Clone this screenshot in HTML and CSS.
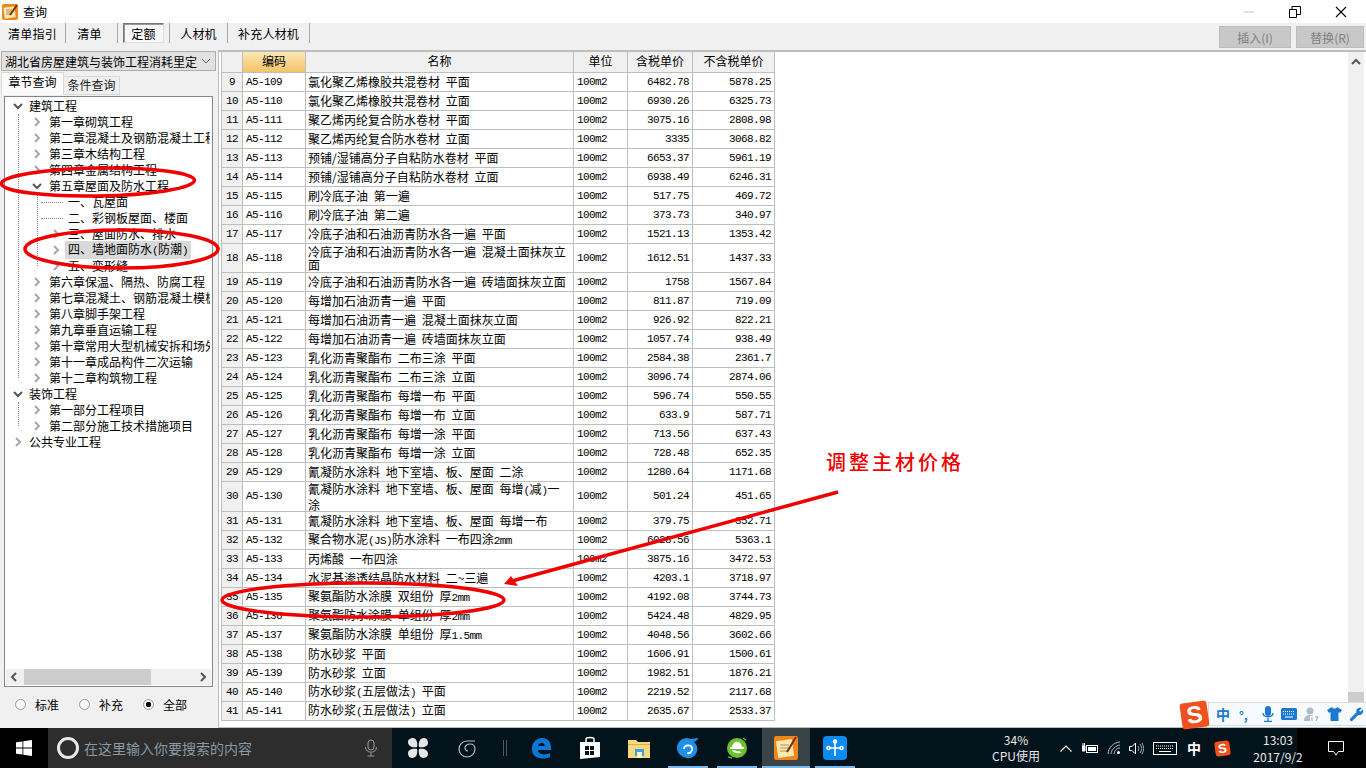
FILE: index.html
```html
<!DOCTYPE html>
<html lang="zh-CN">
<head>
    <meta charset="UTF-8">
    <title>查询</title>
    <link rel="stylesheet" href="styles.css">
</head>
<body>
    <svg class="defs" width="0" height="0">
        <symbol id="tw-closed" viewBox="0 0 10 10"><path d="M3 1l4 4-4 4" fill="none" stroke="#a6a6a6" stroke-width="2"/></symbol>
        <symbol id="tw-open" viewBox="0 0 10 10"><path d="M1 3l4 4 4-4" fill="none" stroke="#555" stroke-width="2"/></symbol>
    </svg>

    <div class="window">
        <div class="titlebar">
            <svg class="app-icon" viewBox="0 0 16 16"><rect width="16" height="16" rx="2" fill="#f0861a"/><rect x="2" y="3" width="11" height="11" fill="#fbe9b0" transform="rotate(-8 7 8)"/><path d="M4 6h6M4 8h6M4 10h5" stroke="#b59060"/><path d="M15 1L8 11" stroke="#7a3008" stroke-width="2"/></svg>
            <span class="title">查询</span>
            <div class="win-controls">
                <span class="win-btn"><svg width="12" height="12" viewBox="0 0 12 12"><path d="M1 6h10" stroke="#c0c0c0"/></svg></span>
                <span class="win-btn"><svg width="12" height="12" viewBox="0 0 12 12"><path d="M.5 3.500h7v8h-7zM3 3V.5h8.500v8H8" fill="none" stroke="#000"/></svg></span>
                <span class="win-btn"><svg width="12" height="12" viewBox="0 0 12 12"><path d="M1 1l10 10M11 1L1 11" stroke="#000" stroke-width="1.100"/></svg></span>
            </div>
        </div>

        <div class="toolbar">
            <span class="tool tool-1">清单指引</span>
            <span class="tool tool-2">清单</span>
            <span class="tool tool-3"><b class="pressed">定额</b></span>
            <span class="tool tool-4">人材机</span>
            <span class="tool tool-5">补充人材机</span>
            <div class="actions">
                <button class="action action-insert">插入(I)</button>
                <button class="action action-replace">替换(R)</button>
            </div>
        </div>

        <div class="main">
            <aside class="sidebar">
                <div class="combo"><span>湖北省房屋建筑与装饰工程消耗里定</span><svg width="10" height="10" viewBox="0 0 10 10"><path d="M1 3l4 4 4-4" fill="none" stroke="#666"/></svg></div>
                <div class="tabs">
                    <span class="tab active">章节查询</span>
                    <span class="tab">条件查询</span>
                </div>
                <div class="treebox">
                    <div class="tree-scroll">
                        <div class="node lv0"><svg class="tw"><use href="#tw-open"/></svg><span>建筑工程</span></div>
                        <div class="branch branch-a">
                            <div class="node lv1"><svg class="tw"><use href="#tw-closed"/></svg><span>第一章砌筑工程</span></div>
                            <div class="node lv1"><svg class="tw"><use href="#tw-closed"/></svg><span>第二章混凝土及钢筋混凝土工程</span></div>
                            <div class="node lv1"><svg class="tw"><use href="#tw-closed"/></svg><span>第三章木结构工程</span></div>
                            <div class="node lv1"><svg class="tw"><use href="#tw-closed"/></svg><span>第四章金属结构工程</span></div>
                            <div class="node lv1"><svg class="tw"><use href="#tw-open"/></svg><span>第五章屋面及防水工程</span></div>
                            <div class="branch branch-b">
                                <div class="node lv2 leaf"><span>一、瓦屋面</span></div>
                                <div class="node lv2 leaf"><span>二、彩钢板屋面、楼面</span></div>
                                <div class="node lv2"><svg class="tw"><use href="#tw-closed"/></svg><span>三、屋面防水、排水</span></div>
                                <div class="node lv2"><svg class="tw"><use href="#tw-closed"/></svg><span class="selected">四、墙地面防水<span class="m">(</span>防潮<span class="m">)</span></span></div>
                                <div class="node lv2"><svg class="tw"><use href="#tw-closed"/></svg><span>五、变形缝</span></div>
                            </div>
                            <div class="node lv1"><svg class="tw"><use href="#tw-closed"/></svg><span>第六章保温、隔热、防腐工程</span></div>
                            <div class="node lv1"><svg class="tw"><use href="#tw-closed"/></svg><span>第七章混凝土、钢筋混凝土模板</span></div>
                            <div class="node lv1"><svg class="tw"><use href="#tw-closed"/></svg><span>第八章脚手架工程</span></div>
                            <div class="node lv1"><svg class="tw"><use href="#tw-closed"/></svg><span>第九章垂直运输工程</span></div>
                            <div class="node lv1"><svg class="tw"><use href="#tw-closed"/></svg><span>第十章常用大型机械安拆和场外</span></div>
                            <div class="node lv1"><svg class="tw"><use href="#tw-closed"/></svg><span>第十一章成品构件二次运输</span></div>
                            <div class="node lv1"><svg class="tw"><use href="#tw-closed"/></svg><span>第十二章构筑物工程</span></div>
                        </div>
                        <div class="node lv0"><svg class="tw"><use href="#tw-open"/></svg><span>装饰工程</span></div>
                        <div class="branch branch-a">
                            <div class="node lv1"><svg class="tw"><use href="#tw-closed"/></svg><span>第一部分工程项目</span></div>
                            <div class="node lv1"><svg class="tw"><use href="#tw-closed"/></svg><span>第二部分施工技术措施项目</span></div>
                        </div>
                        <div class="node lv0"><svg class="tw"><use href="#tw-closed"/></svg><span>公共专业工程</span></div>
                    </div>
                    <div class="hscroll">
                        <svg width="17" height="16" viewBox="0 0 17 16"><path d="M10 4L6 8l4 4" fill="none" stroke="#555" stroke-width="2"/></svg>
                        <div class="hscroll-track"><div class="hscroll-thumb"></div></div>
                        <svg width="17" height="16" viewBox="0 0 17 16"><path d="M7 4l4 4-4 4" fill="none" stroke="#555" stroke-width="2"/></svg>
                    </div>
                </div>
                <div class="radios">
                    <label class="radio"><i></i>标准</label>
                    <label class="radio"><i></i>补充</label>
                    <label class="radio on"><i></i>全部</label>
                </div>
            </aside>

            <section class="grid">
                <table>
                    <thead>
                        <tr><th class="c-no"></th><th class="c-code sorted">编码</th><th class="c-name">名称</th><th class="c-unit">单位</th><th class="c-price">含税单价</th><th class="c-net">不含税单价</th></tr>
                    </thead>
                    <tbody>
                        <tr><td class="no">9</td><td class="m">A5-109</td><td class="n">氯化聚乙烯橡胶共混卷材 平面</td><td class="m">100m2</td><td class="m r">6482.78</td><td class="m r">5878.25</td></tr>
                        <tr><td class="no">10</td><td class="m">A5-110</td><td class="n">氯化聚乙烯橡胶共混卷材 立面</td><td class="m">100m2</td><td class="m r">6930.26</td><td class="m r">6325.73</td></tr>
                        <tr><td class="no">11</td><td class="m">A5-111</td><td class="n">聚乙烯丙纶复合防水卷材 平面</td><td class="m">100m2</td><td class="m r">3075.16</td><td class="m r">2808.98</td></tr>
                        <tr><td class="no">12</td><td class="m">A5-112</td><td class="n">聚乙烯丙纶复合防水卷材 立面</td><td class="m">100m2</td><td class="m r">3335</td><td class="m r">3068.82</td></tr>
                        <tr><td class="no">13</td><td class="m">A5-113</td><td class="n">预铺/湿铺高分子自粘防水卷材 平面</td><td class="m">100m2</td><td class="m r">6653.37</td><td class="m r">5961.19</td></tr>
                        <tr><td class="no">14</td><td class="m">A5-114</td><td class="n">预铺/湿铺高分子自粘防水卷材 立面</td><td class="m">100m2</td><td class="m r">6938.49</td><td class="m r">6246.31</td></tr>
                        <tr><td class="no">15</td><td class="m">A5-115</td><td class="n">刷冷底子油 第一遍</td><td class="m">100m2</td><td class="m r">517.75</td><td class="m r">469.72</td></tr>
                        <tr><td class="no">16</td><td class="m">A5-116</td><td class="n">刷冷底子油 第二遍</td><td class="m">100m2</td><td class="m r">373.73</td><td class="m r">340.97</td></tr>
                        <tr><td class="no">17</td><td class="m">A5-117</td><td class="n">冷底子油和石油沥青防水各一遍 平面</td><td class="m">100m2</td><td class="m r">1521.13</td><td class="m r">1353.42</td></tr>
                        <tr class="tall"><td class="no">18</td><td class="m">A5-118</td><td class="n">冷底子油和石油沥青防水各一遍 混凝土面抹灰立面</td><td class="m">100m2</td><td class="m r">1612.51</td><td class="m r">1437.33</td></tr>
                        <tr><td class="no">19</td><td class="m">A5-119</td><td class="n">冷底子油和石油沥青防水各一遍 砖墙面抹灰立面</td><td class="m">100m2</td><td class="m r">1758</td><td class="m r">1567.84</td></tr>
                        <tr><td class="no">20</td><td class="m">A5-120</td><td class="n">每增加石油沥青一遍 平面</td><td class="m">100m2</td><td class="m r">811.87</td><td class="m r">719.09</td></tr>
                        <tr><td class="no">21</td><td class="m">A5-121</td><td class="n">每增加石油沥青一遍 混凝土面抹灰立面</td><td class="m">100m2</td><td class="m r">926.92</td><td class="m r">822.21</td></tr>
                        <tr><td class="no">22</td><td class="m">A5-122</td><td class="n">每增加石油沥青一遍 砖墙面抹灰立面</td><td class="m">100m2</td><td class="m r">1057.74</td><td class="m r">938.49</td></tr>
                        <tr><td class="no">23</td><td class="m">A5-123</td><td class="n">乳化沥青聚酯布 二布三涂 平面</td><td class="m">100m2</td><td class="m r">2584.38</td><td class="m r">2361.7</td></tr>
                        <tr><td class="no">24</td><td class="m">A5-124</td><td class="n">乳化沥青聚酯布 二布三涂 立面</td><td class="m">100m2</td><td class="m r">3096.74</td><td class="m r">2874.06</td></tr>
                        <tr><td class="no">25</td><td class="m">A5-125</td><td class="n">乳化沥青聚酯布 每增一布 平面</td><td class="m">100m2</td><td class="m r">596.74</td><td class="m r">550.55</td></tr>
                        <tr><td class="no">26</td><td class="m">A5-126</td><td class="n">乳化沥青聚酯布 每增一布 立面</td><td class="m">100m2</td><td class="m r">633.9</td><td class="m r">587.71</td></tr>
                        <tr><td class="no">27</td><td class="m">A5-127</td><td class="n">乳化沥青聚酯布 每增一涂 平面</td><td class="m">100m2</td><td class="m r">713.56</td><td class="m r">637.43</td></tr>
                        <tr><td class="no">28</td><td class="m">A5-128</td><td class="n">乳化沥青聚酯布 每增一涂 立面</td><td class="m">100m2</td><td class="m r">728.48</td><td class="m r">652.35</td></tr>
                        <tr><td class="no">29</td><td class="m">A5-129</td><td class="n">氰凝防水涂料 地下室墙、板、屋面 二涂</td><td class="m">100m2</td><td class="m r">1280.64</td><td class="m r">1171.68</td></tr>
                        <tr class="tall"><td class="no">30</td><td class="m">A5-130</td><td class="n">氰凝防水涂料 地下室墙、板、屋面 每增<span class="m">(</span>减<span class="m">)</span>一涂</td><td class="m">100m2</td><td class="m r">501.24</td><td class="m r">451.65</td></tr>
                        <tr><td class="no">31</td><td class="m">A5-131</td><td class="n">氰凝防水涂料 地下室墙、板、屋面 每增一布</td><td class="m">100m2</td><td class="m r">379.75</td><td class="m r">352.71</td></tr>
                        <tr><td class="no">32</td><td class="m">A5-132</td><td class="n">聚合物水泥<span class="m">(JS)</span>防水涂料 一布四涂<span class="m">2mm</span></td><td class="m">100m2</td><td class="m r">6028.56</td><td class="m r">5363.1</td></tr>
                        <tr><td class="no">33</td><td class="m">A5-133</td><td class="n">丙烯酸 一布四涂</td><td class="m">100m2</td><td class="m r">3875.16</td><td class="m r">3472.53</td></tr>
                        <tr><td class="no">34</td><td class="m">A5-134</td><td class="n">水泥基渗透结晶防水材料 二~三遍</td><td class="m">100m2</td><td class="m r">4203.1</td><td class="m r">3718.97</td></tr>
                        <tr><td class="no">35</td><td class="m">A5-135</td><td class="n">聚氨酯防水涂膜 双组份 厚<span class="m">2mm</span></td><td class="m">100m2</td><td class="m r">4192.08</td><td class="m r">3744.73</td></tr>
                        <tr><td class="no">36</td><td class="m">A5-136</td><td class="n">聚氨酯防水涂膜 单组份 厚<span class="m">2mm</span></td><td class="m">100m2</td><td class="m r">5424.48</td><td class="m r">4829.95</td></tr>
                        <tr><td class="no">37</td><td class="m">A5-137</td><td class="n">聚氨酯防水涂膜 单组份 厚<span class="m">1.5mm</span></td><td class="m">100m2</td><td class="m r">4048.56</td><td class="m r">3602.66</td></tr>
                        <tr><td class="no">38</td><td class="m">A5-138</td><td class="n">防水砂浆 平面</td><td class="m">100m2</td><td class="m r">1606.91</td><td class="m r">1500.61</td></tr>
                        <tr><td class="no">39</td><td class="m">A5-139</td><td class="n">防水砂浆 立面</td><td class="m">100m2</td><td class="m r">1982.51</td><td class="m r">1876.21</td></tr>
                        <tr><td class="no">40</td><td class="m">A5-140</td><td class="n">防水砂浆<span class="m">(</span>五层做法<span class="m">)</span> 平面</td><td class="m">100m2</td><td class="m r">2219.52</td><td class="m r">2117.68</td></tr>
                        <tr><td class="no">41</td><td class="m">A5-141</td><td class="n">防水砂浆<span class="m">(</span>五层做法<span class="m">)</span> 立面</td><td class="m">100m2</td><td class="m r">2635.67</td><td class="m r">2533.37</td></tr>
                    </tbody>
                </table>
                <div class="vscroll">
                    <svg width="16" height="16" viewBox="0 0 16 16"><path d="M4 10l4-4 4 4" fill="none" stroke="#555" stroke-width="2"/></svg>
                    <div class="vscroll-thumb"></div>
                </div>
            </section>
        </div>
    </div>

    <footer class="taskbar">
        <div class="start"><svg width="16" height="16" viewBox="0 0 16 16"><path d="M0 2.300l6.500-.9v6.200H0zM7.300 1.300L16 0v7.600H7.300zM0 8.400h6.500v6.200L0 13.700zM7.300 8.400H16V16l-8.700-1.300z" fill="#fff"/></svg></div>
        <div class="search">
            <span class="cortana"></span>
            <span class="search-text">在这里输入你要搜索的内容</span>
            <svg class="search-mic" width="14" height="18" viewBox="0 0 14 18"><rect x="4" y="1" width="6" height="10" rx="3" fill="none" stroke="#999"/><path d="M1.500 8c0 7 11 7 11 0M7 14v3M3.500 17h7" fill="none" stroke="#999"/></svg>
        </div>
        <div class="tb-slot"><svg width="24" height="24" viewBox="0 0 24 24"><g fill="#e6e6e6"><path d="M11 11C6 12 2 10 2 6c0-3 3-4 5-4 3 0 5 4 4 9z"/><path d="M13 11C12 6 14 2 18 2c3 0 4 3 4 5 0 3-4 5-9 4z"/><path d="M13 13c5-1 9 1 9 5 0 3-3 4-5 4-3 0-5-4-4-9z"/><path d="M11 13c1 5-1 9-5 9-3 0-4-3-4-5 0-3 4-5 9-4z"/></g></svg></div>
        <div class="tb-slot"><svg width="20" height="20" viewBox="0 0 20 20"><path d="M18 3H10a8 8 0 1 0 8 8c0-3-2-5-5-5s-5 2-5 4 2 3 3 3" fill="none" stroke="#bbb" stroke-width="1.200"/></svg></div>
        <div class="tb-sep"><i></i><i></i></div>
        <div class="tb-slot"><svg width="22" height="22" viewBox="0 0 22 22"><path d="M2 12C2 5 7 1 12 1c6 0 9 4 9 10v2H8c0 4 6 6 12 3v4c-7 3-18 2-18-8zm6-3h7c0-4-6-4-7 0z" fill="#0a78d7"/></svg></div>
        <div class="tb-slot"><svg width="22" height="24" viewBox="0 0 22 24"><path d="M1 6h20v15l-20 2z" fill="#fff"/><path d="M7 6V3c0-2 8-2 8 0v3" fill="none" stroke="#fff" stroke-width="1.500"/><path d="M6 10h4v4H6zM11 10h4v4h-4zM6 15h4v4H6zM11 15h4v4h-4z" fill="#001018"/></svg></div>
        <div class="tb-slot"><svg width="22" height="20" viewBox="0 0 22 20"><path d="M0 2h8l2 2h12v16H0z" fill="#f5d77e"/><path d="M0 6h22v1H0z" fill="#e0b040"/><rect x="7" y="11" width="9" height="7" fill="#3aa0e0"/><rect x="9" y="14" width="5" height="6" fill="#fdf0c0"/></svg></div>
        <div class="tb-slot running"><svg width="24" height="24" viewBox="0 0 24 24"><path d="M1 12C1 6 6 2 11 2c2 0 3 1 4 1 2 0 5-1 8-1-2 2-3 3-5 4 3 3 4 6 3 9-1 5-6 8-10 7-6-1-10-5-10-10z" fill="#1f8ee8"/><path d="M8 13c0-4 7-5 8-1 1 3-2 6-5 5" fill="none" stroke="#fff" stroke-width="1.800"/></svg></div>
        <div class="tb-slot running"><svg width="24" height="24" viewBox="0 0 24 24"><circle cx="12" cy="12" r="10" fill="#6cc22e"/><path d="M5 12h14" stroke="#fff" stroke-width="2"/><path d="M7 11c1-7 9-7 10 0zM7 14c2 4 7 4 10 2" fill="#fff"/><path d="M18 2l3 2M3 21l4 1" stroke="#5fb02a" stroke-width="1.500"/></svg></div>
        <div class="tb-slot running active"><svg width="24" height="24" viewBox="0 0 24 24"><rect x="0" y="0" width="24" height="24" rx="2" fill="#f0861a"/><rect x="3" y="4" width="16" height="17" fill="#fbe9b0" transform="rotate(-8 11 12)"/><path d="M6 9h9M6 12h9M6 15h7" stroke="#b59060" stroke-width="1"/><path d="M22 1L13 16" stroke="#7a3008" stroke-width="2"/></svg></div>
        <div class="tb-slot running"><svg width="24" height="24" viewBox="0 0 24 24"><rect width="24" height="24" rx="4" fill="#0d8bf0"/><path d="M12 4v16M12 4c-2 0-2 3 0 3s2-3 0-3zM4 12c0-2 3-2 3 0s-3 2-3 0zM20 12c0-2-3-2-3 0s3 2 3 0zM6 12h12" fill="none" stroke="#fff" stroke-width="1.600"/></svg></div>

        <div class="cpu"><span>34%</span><span>CPU使用</span></div>
        <div class="tray tray-up"><svg width="12" height="7" viewBox="0 0 12 7"><path d="M.5 6.500L6 1l5.500 5.500" fill="none" stroke="#fff" stroke-width="1.100"/></svg></div>
        <div class="tray tray-bat"><svg width="17" height="11" viewBox="0 0 17 11"><rect x="4.500" y="2.500" width="11" height="7" fill="none" stroke="#fff"/><rect x="6" y="4" width="8" height="4" fill="#fff"/><path d="M0 3h3v5H0zM1 0v3M2.500 0v3" stroke="#fff" fill="#fff"/></svg></div>
        <div class="tray tray-wifi"><svg width="14" height="14" viewBox="0 0 14 14"><path d="M1 13C1 7 7 1 13 1M4 13c0-4 5-9 9-9M7 13c0-3 3-6 6-6" fill="none" stroke="#bbb"/><circle cx="11.500" cy="11.500" r="1.500" fill="#fff"/></svg></div>
        <div class="tray tray-vol"><svg width="16" height="13" viewBox="0 0 16 13"><path d="M.5 4.500h2.500L6.500 1v11L3 8.500H.5z" fill="none" stroke="#fff"/><path d="M9 4c1 1 1 4 0 5M11 2c2 2 2 7 0 9M13 1c2 3 2 8 0 11" fill="none" stroke="#aaa"/></svg></div>
        <div class="tray tray-kbd"><svg width="24" height="13" viewBox="0 0 24 13"><rect x=".5" y=".5" width="23" height="12" fill="none" stroke="#fff"/><path d="M3 4h18M3 6.500h18" stroke="#fff" stroke-dasharray="1 1"/><path d="M6 9.500h12" stroke="#fff"/></svg></div>
        <div class="tray tray-ime">中</div>
        <div class="tray tray-sogou"><span class="sogou-s small">S</span></div>
        <div class="clock"><span>13:03</span><span>2017/9/2</span></div>
        <div class="notify"><svg width="16" height="15" viewBox="0 0 16 15"><path d="M.5.500h15v10h-5L8 14l-2.500-3.500h-5z" fill="none" stroke="#fff"/></svg></div>
    </footer>

    <div class="ime-bar">
        <span class="sogou-s">S</span>
        <div class="ime-tools">
            <b class="ime-zh">中</b>
            <b class="ime-punc">°,</b>
            <svg width="12" height="16" viewBox="0 0 12 16"><rect x="3" y="0" width="6" height="10" rx="3" fill="#1a7ad0"/><path d="M1 7c0 5 10 5 10 0M6 12v3M2 15.500h8" fill="none" stroke="#1a7ad0" stroke-width="1.300"/></svg>
            <svg width="16" height="12" viewBox="0 0 16 12"><rect width="16" height="12" rx="1.500" fill="#1a7ad0"/><path d="M2 3.500h12M2 6h12" stroke="#fff" stroke-dasharray="1 1"/><path d="M4 9h8" stroke="#fff"/></svg>
            <svg width="16" height="15" viewBox="0 0 16 15"><circle cx="6" cy="4" r="3.500" fill="#aebccb"/><path d="M0 14c0-5 3-6 6-6s6 1 6 6z" fill="#aebccb"/><rect x="6" y="9" width="10" height="6" fill="#fff"/><path d="M8 10v4M11 10h3l-2 4" fill="none" stroke="#99a" /></svg>
            <svg width="15" height="14" viewBox="0 0 15 14"><path d="M5 0L0 3l2 3 1.500-1v9h8V5L13 6l2-3-5-3c-1 2-4 2-5 0z" fill="#1a7ad0"/></svg>
            <svg width="15" height="15" viewBox="0 0 14 14"><path d="M1 11l6-6C6 2 9 0 12 1l-2.500 2.500 1 1L13 2c1 3-1 6-4.500 5.500L3 13c-1 1-3-1-2-2z" fill="#1a7ad0"/></svg>
        </div>
    </div>

    <div class="note">调整主材价格</div>
    <svg class="marks" width="1366" height="768" viewBox="0 0 1366 768">
        <g fill="none" stroke="#f00000" stroke-width="3.500">
            <ellipse cx="98" cy="182" rx="96.500" ry="14" transform="rotate(-1 98 182)"/>
            <ellipse cx="121.500" cy="249" rx="96.500" ry="19"/>
            <ellipse cx="363" cy="600" rx="141" ry="17"/>
            <path d="M838 492L512 581"/>
        </g>
        <path d="M504 584l7-8 7 10z" fill="#f00000"/>
    </svg>
</body>
</html>
```

FILE: styles.css
```css
* {
    box-sizing: border-box;
}

html, body {
    margin: 0;
    padding: 0;
    width: 1366px;
    height: 768px;
    overflow: hidden;
}

body {
    position: relative;
    font-family: "Noto Sans CJK SC", "Liberation Sans", sans-serif;
    font-size: 12px;
    color: #000;
    background-color: #f0f0f0;
}

.defs {
    display: block;
    height: 0;
}

.window {
    display: flex;
    flex-direction: column;
    height: 728px;
}

/* title bar */
.titlebar {
    display: flex;
    align-items: center;
    height: 23px;
    background-color: #fff;
}

.app-icon {
    width: 16px;
    height: 16px;
    margin-left: 2px;
}

.title {
    margin-left: 5px;
}

.win-controls {
    display: flex;
    margin-left: auto;
    margin-right: 2px;
}

.win-btn {
    display: flex;
    justify-content: center;
    align-items: center;
    width: 46px;
    height: 23px;
}

/* toolbar */
.toolbar {
    display: flex;
    align-items: flex-start;
    height: 27px;
    background-color: #f0f0f0;
}

.tool {
    display: flex;
    justify-content: center;
    align-items: center;
    height: 20px;
    border-right: 1px solid #a8a8a8;
    font-size: 12px;
    letter-spacing: .2px;
}

.tool-1 { width: 66px; }
.tool-2 { width: 52px; padding-right: 4px; }
.tool-3 { width: 52px; }
.tool-4 { width: 58px; }
.tool-5 { width: 82px; }

.pressed {
    display: block;
    width: 41px;
    height: 20px;
    line-height: 20px;
    text-align: center;
    font-weight: normal;
    border: 1px solid;
    border-color: #777 #ddd #ddd #777;
    box-shadow: inset 1px 1px 0 #999;
    background-color: #f8f8f8;
}

.actions {
    display: flex;
    gap: 5px;
    margin-left: auto;
    margin-right: 2px;
    margin-top: 3px;
}

.action {
    height: 22px;
    padding: 0;
    border: 1px solid #bdbdbd;
    background-color: #c8c8c8;
    color: #808080;
    font-family: inherit;
    font-size: 12px;
}

.action-insert { width: 72px; }
.action-replace { width: 68px; }

/* main */
.main {
    display: flex;
    flex: 1;
    min-height: 0;
}

.sidebar {
    display: flex;
    flex-direction: column;
    width: 219px;
    padding: 1px 3px 0 1px;
    border-right: 1px solid #bbb;
}

.combo {
    display: flex;
    justify-content: space-between;
    align-items: center;
    height: 20px;
    width: 215px;
    padding: 0 4px 0 3px;
    border: 1px solid #adadad;
    background-color: #e1e1e1;
}

.tabs {
    display: flex;
    align-items: flex-end;
    height: 23px;
    margin-top: 1px;
}

.tab {
    display: block;
    width: 56px;
    height: 19px;
    line-height: 16px;
    text-align: center;
    border: 1px solid #d9d9d9;
    border-left: 0;
    background-color: #f0f0f0;
    color: #222;
}

.tab.active {
    width: 63px;
    height: 23px;
    line-height: 18px;
    background-color: #fafafa;
    border-left: 1px solid #d9d9d9;
    border-bottom: 0;
    color: #000;
}

.treebox {
    display: flex;
    flex-direction: column;
    width: 209px;
    height: 591px;
    margin: 1px 0 0 3px;
    border: 1px solid #828790;
    background-color: #fff;
}

.tree-scroll {
    flex: 1;
    min-height: 0;
    margin-right: 2px;
    overflow: hidden;
    padding-top: 1px;
    white-space: nowrap;
}

.node {
    display: flex;
    align-items: center;
    position: relative;
    height: 16px;
    line-height: 16px;
}

.tw {
    position: absolute;
    top: 3px;
    width: 10px;
    height: 10px;
}

.lv0 { padding-left: 24px; }
.lv0 .tw { left: 8px; }
.lv1 { padding-left: 44px; }
.lv1 .tw { left: 27px; }
.lv2 { padding-left: 60px; }
.lv2 .tw { left: 46px; }

.lv2 > span {
    padding: 0 3px;
}

.selected {
    background-color: #d9d9d9;
}

.leaf::before {
    content: "";
    position: absolute;
    left: 36px;
    top: 8px;
    width: 22px;
    border-top: 1px dotted #888;
}

.branch {
    position: relative;
}

.branch::before {
    content: "";
    position: absolute;
    top: 0;
    bottom: 8px;
    border-left: 1px dotted #888;
}

.branch-a::before { left: 13px; }
.branch-b::before { left: 32px; }

.hscroll {
    display: flex;
    align-items: center;
    height: 16px;
    margin: 0 1px 1px;
    background-color: #f0f0f0;
}

.hscroll-track {
    flex: 1;
    height: 16px;
}

.hscroll-thumb {
    width: 127px;
    height: 16px;
    margin-left: 1px;
    background-color: #cdcdcd;
}

.radios {
    display: flex;
    margin-top: 8px;
    padding-left: 14px;
}

.radio {
    display: flex;
    align-items: center;
    width: 64px;
    height: 18px;
    gap: 9px;
}

.radio i {
    display: block;
    width: 11px;
    height: 11px;
    border: 1px solid #9a9a9a;
    border-radius: 50%;
    background-color: #f6f6f6;
}

.radio.on i {
    background: radial-gradient(circle, #000 0, #000 2.500px, #f6f6f6 3px);
}

/* grid */
.grid {
    position: relative;
    flex: 1;
    padding-left: 2px;
    background-color: #fff;
    border-top: 2px solid #bdbdbd;
    border-bottom: 1px solid #bdbdbd;
}

table {
    border-collapse: collapse;
    table-layout: fixed;
    width: 553px;
}

th, td {
    height: 19px;
    padding: 0;
    border: 1px solid #bebebe;
    line-height: 13px;
    font-weight: normal;
    overflow: hidden;
}

th {
    height: 20px;
    padding-bottom: 2px;
    background-color: #f0f0f0;
    text-align: center;
    border-top: 0;
}

th.sorted {
    background: linear-gradient(#fbe7b5, #f5c266);
}

.c-no { width: 21px; }
.c-code { width: 63px; }
.c-name { width: 268px; }
.c-unit { width: 54px; }
.c-price { width: 65px; }
.c-net { width: 82px; }

tr.tall td {
    height: 29px;
}

.no {
    padding-top: 1px;
    text-align: center;
    background-color: #f0f0f0;
    font-family: "Liberation Mono", monospace;
    font-size: 11px;
    letter-spacing: -.6px;
}

.m {
    font-family: "Liberation Mono", monospace;
    font-size: 11px;
    letter-spacing: -.6px;
}

td.m {
    padding: 1px 0 0 3px;
}

td.r {
    padding: 1px 3px 0 0;
    text-align: right;
}

.n {
    padding: 0 5px 0 2px;
    word-spacing: 3px;
}

.vscroll {
    position: absolute;
    top: 0;
    right: 2px;
    bottom: 0;
    width: 16px;
    background-color: #f0f0f0;
}

.vscroll svg {
    display: block;
    margin-top: 2px;
}

.vscroll-thumb {
    position: absolute;
    left: 0;
    bottom: 21px;
    width: 16px;
    height: 14px;
    background-color: #cdcdcd;
}

/* taskbar */
.taskbar {
    display: flex;
    align-items: center;
    height: 40px;
    background: linear-gradient(90deg, #03131b 1297px, #000 1297px);
    color: #fff;
}

.start {
    display: flex;
    justify-content: center;
    align-items: center;
    width: 48px;
    height: 40px;
    background-color: #000;
}

.search {
    display: flex;
    align-items: center;
    width: 344px;
    height: 40px;
    margin-right: 2px;
    padding-left: 9px;
    background-color: #2d2d2d;
}

.cortana {
    display: block;
    width: 22px;
    height: 22px;
    border: 3px solid #e8e8e8;
    border-radius: 50%;
}

.search-text {
    margin-left: 5px;
    font-size: 14px;
    color: #8a99a3;
}

.search-mic {
    margin-left: auto;
    margin-right: 14px;
}

.tb-slot {
    display: flex;
    justify-content: center;
    align-items: center;
    position: relative;
    width: 48px;
    height: 40px;
    margin-right: 1px;
}

.tb-slot.running::after {
    content: "";
    position: absolute;
    left: 4px;
    right: 4px;
    bottom: 0;
    height: 2px;
    background-color: #76b9ed;
}

.tb-slot.active {
    background-color: #3a4346;
}

.tb-slot.active::after {
    left: 0;
    right: 0;
}

.tb-sep {
    display: flex;
    justify-content: center;
    gap: 2px;
    width: 25px;
}

.tb-sep i {
    display: block;
    width: 1px;
    height: 16px;
    background-color: #555;
}

.cpu {
    display: flex;
    flex-direction: column;
    align-items: center;
    width: 60px;
    margin-left: 126px;
    line-height: 16px;
    color: #e8e8e8;
}

.tray {
    display: flex;
    justify-content: center;
    align-items: center;
    height: 40px;
}

.tray-up { width: 24px; margin-left: 8px; }
.tray-bat { width: 24px; }
.tray-wifi { width: 24px; }
.tray-vol { width: 22px; }
.tray-kbd { width: 34px; }
.tray-ime { width: 24px; font-size: 14px; font-weight: 700; }
.tray-sogou { width: 32px; }

.clock {
    display: flex;
    flex-direction: column;
    align-items: center;
    width: 60px;
    margin-left: 10px;
    line-height: 17px;
    color: #e8e8e8;
}

.notify {
    display: flex;
    justify-content: center;
    align-items: center;
    width: 44px;
    height: 40px;
    margin-left: 6px;
}

/* floating stuff */
.sogou-s {
    display: flex;
    justify-content: center;
    align-items: center;
    flex: none;
    width: 27px;
    height: 26px;
    border-radius: 3px;
    background-color: #f0501e;
    color: #fff;
    font-family: "Liberation Sans", sans-serif;
    font-size: 24px;
    font-weight: 700;
    transform: rotate(-8deg);
}

.sogou-s.small {
    width: 15px;
    height: 15px;
    font-size: 13px;
}

.ime-bar {
    position: absolute;
    left: 1181px;
    top: 702px;
    display: flex;
    align-items: center;
    width: 185px;
    height: 25px;
}

.ime-tools {
    display: flex;
    align-items: center;
    gap: 7px;
    width: 158px;
    height: 24px;
    margin-top: -1px;
    padding-left: 7px;
    background-color: #f7fafd;
    border: 1px solid #d5dde5;
    border-right: 0;
}

.ime-zh {
    font-size: 14px;
    color: #1a7ad0;
}

.ime-punc {
    width: 13px;
    margin: 0 3px 0 2px;
    font-size: 12px;
    color: #1a7ad0;
}

.note {
    position: absolute;
    left: 826px;
    top: 447px;
    font-size: 20px;
    font-weight: 500;
    line-height: 30px;
    letter-spacing: 3px;
    color: #f00000;
}

.marks {
    position: absolute;
    left: 0;
    top: 0;
    pointer-events: none;
}
```
